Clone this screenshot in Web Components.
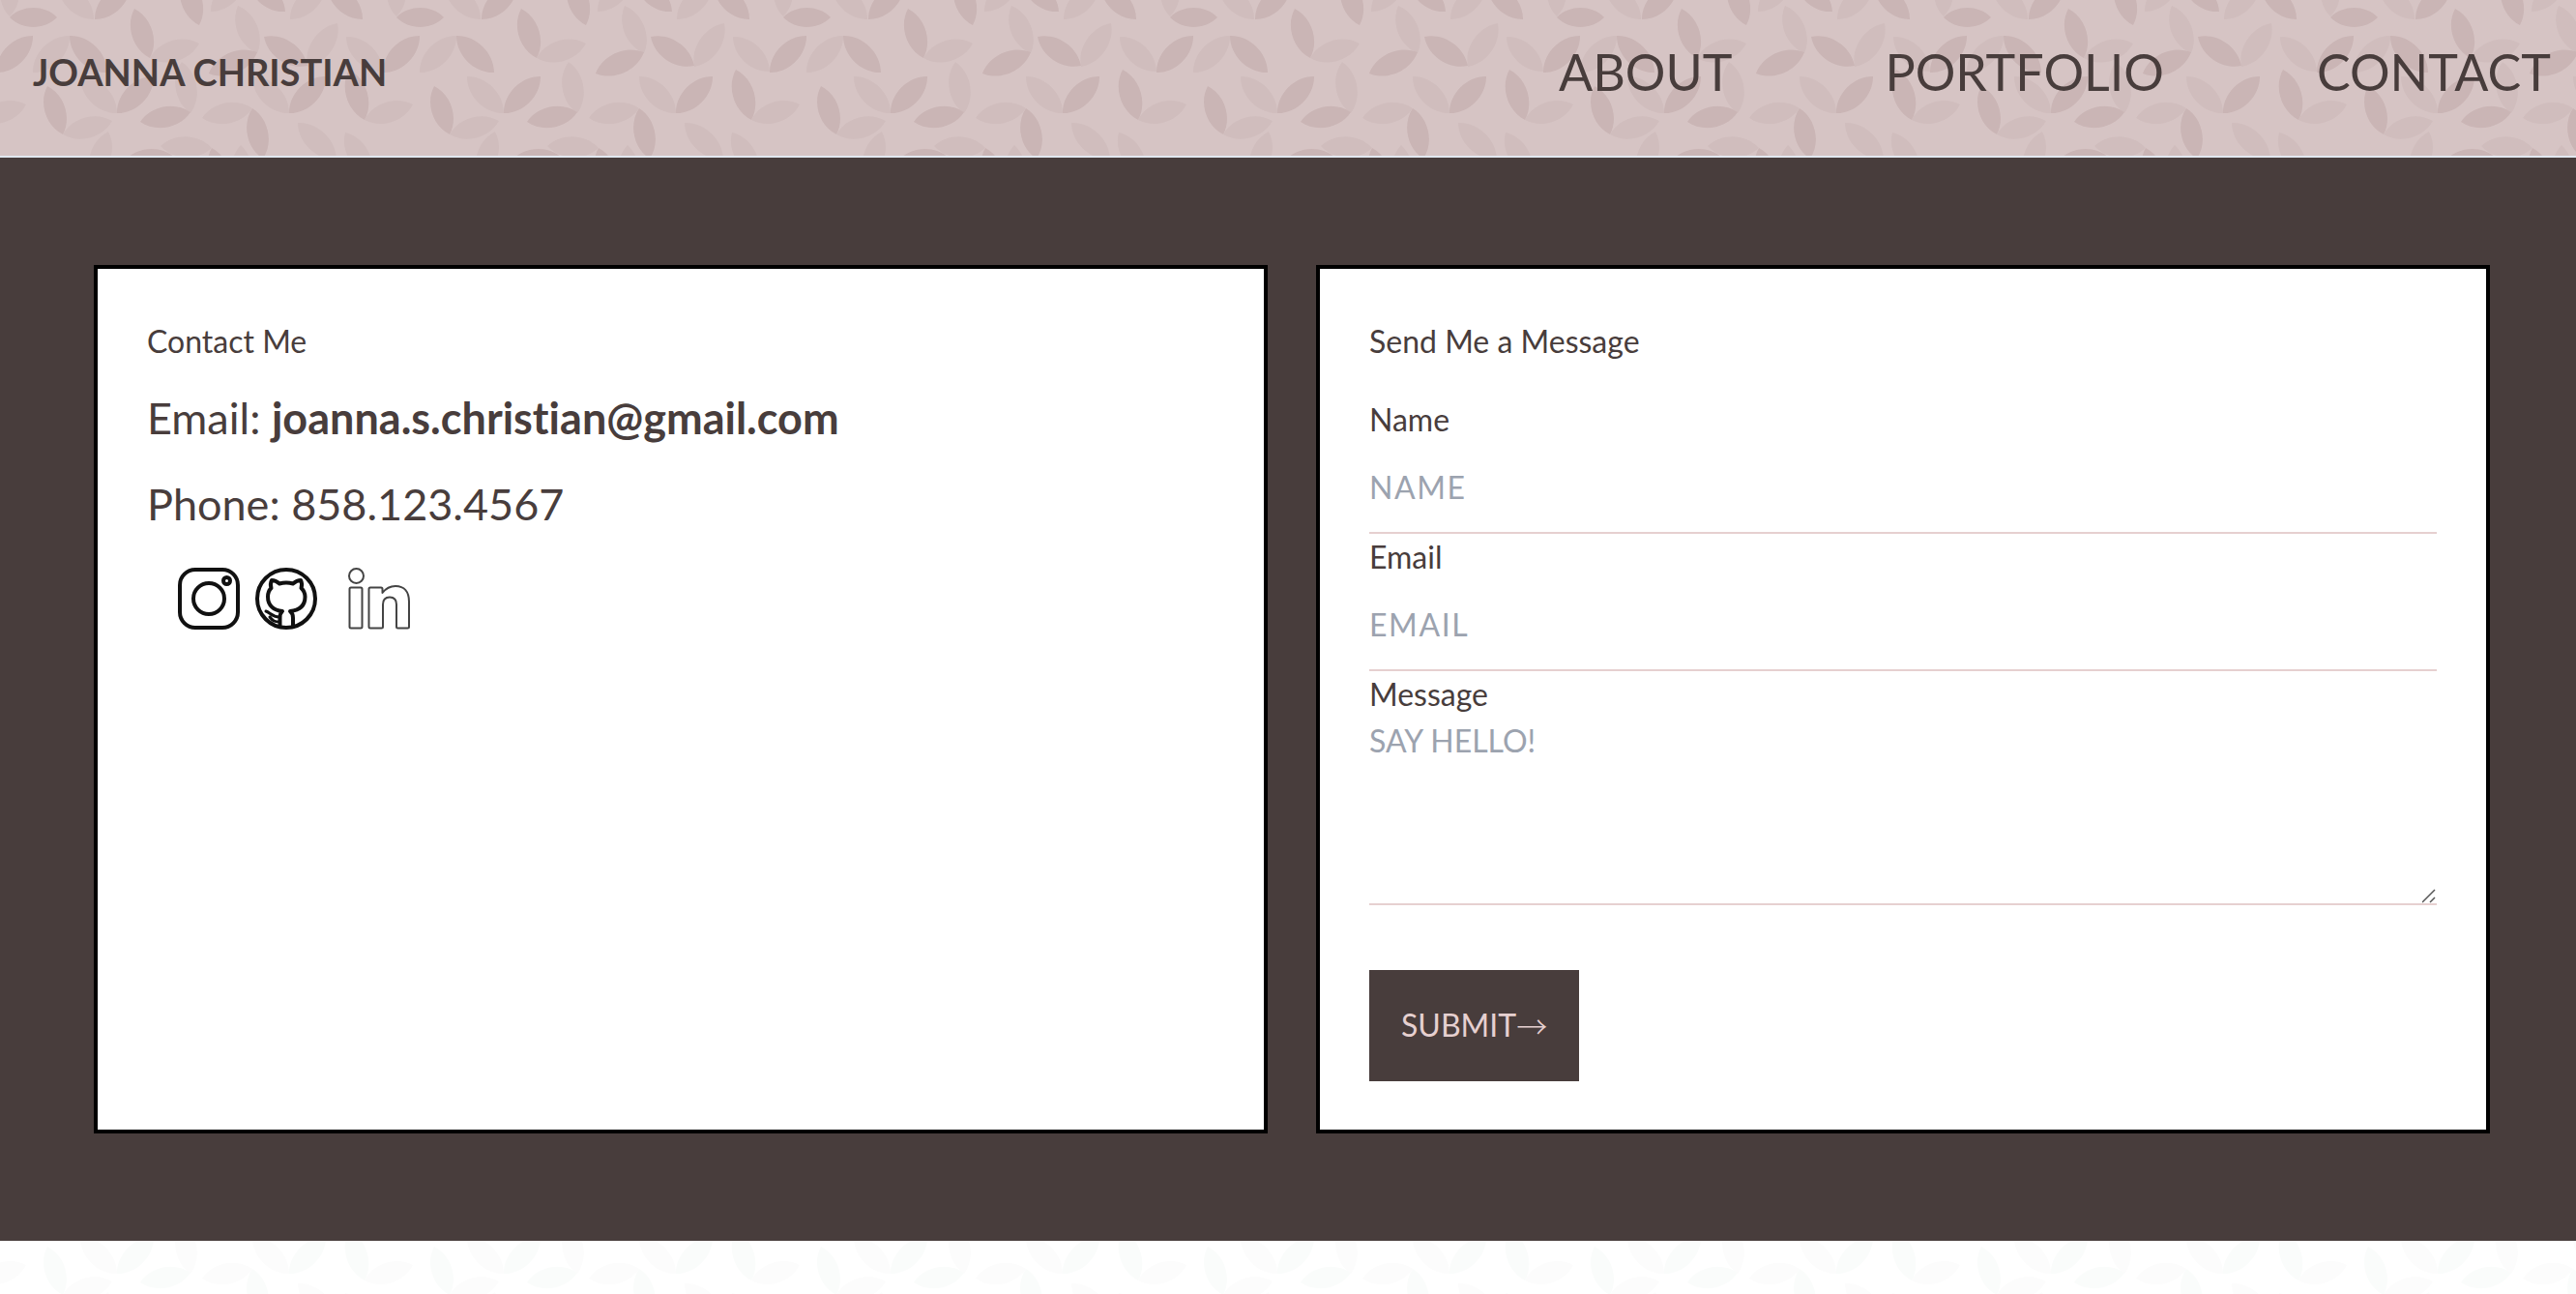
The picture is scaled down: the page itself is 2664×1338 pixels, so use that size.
<!DOCTYPE html>
<html lang="en">
<head>
<meta charset="utf-8">
<meta name="viewport" content="width=device-width, initial-scale=1">
<title>Joanna Christian</title>
<style>
  :root { --ink: #483d3c; --blush: #e6d0d0; }
  body { margin: 0; background: #fff; color: var(--ink); font: 32px/48px Lato, "Open Sans", sans-serif; font-variant-ligatures: none; }
</style>
</head>
<body>
<portfolio-page></portfolio-page>

<script>
// Leaves of the 400px tile: [shade, x1, y1, x2, y2], tip to tip
const LEAVES = [
  ['l',300,20,337,-17],['d',375,20,338,-17],['l',10,17,10,-33],['d',10,18,59,18],
  ['l',97,20,60,-17],['d',98,20,135,-17],['d',206,26,190,-25],['l',218,12,254,-25],
  ['d',295,12,257,-21],['d',139,9,155,60],['l',155,60,206,45],['l',246,6,266,55],
  ['d',266,54,216,76],['d',273,38,318,68],['l',318,69,349,24],['l',358,38,396,74],
  ['d',396,75,434,37],['l',34,75,72,37],['d',72,37,111,75],['d',299,117,337,79],
  ['l',261,79,299,117],['d',361,72,377,124],['l',377,124,427,108],['d',49,89,65,139],
  ['l',65,139,116,125],['l',83,79,121,117],['d',121,117,159,79],['l',188,64,197,117],
  ['d',197,116,145,126],['l',209,122,261,112],['d',261,112,272,164],['l',308,127,348,165],
  ['l',357,137,384,182],['l',112,136,96,186],['l',166,151,219,153],['d',219,153,234,204],
  ['d',129,166,181,163],['l',249,150,251,202]
];

// A leaf is two mirrored curves that meet at its tips
function leafPath(x1, y1, x2, y2) {
  const dx = x2 - x1, dy = y2 - y1, k = 0.54;
  const px = -dy * k, py = dx * k;
  const p = (t, s) => `${(x1 + dx * t + px * s).toFixed(1)} ${(y1 + dy * t + py * s).toFixed(1)}`;
  return `M${x1} ${y1}C${p(.26, .5)} ${p(.74, .5)} ${x2} ${y2}C${p(.74, -.5)} ${p(.26, -.5)} ${x1} ${y1}Z`;
}
const svgUrl = svg => `url("data:image/svg+xml,${encodeURIComponent(svg)}")`;
function leafTile(dark, light) {
  const draw = (shade, fill) => {
    const d = LEAVES.filter(l => l[0] === shade).map(l => leafPath(...l.slice(1))).join('');
    return `<g fill="${fill}"><path d="${d}"/><path d="${d}" transform="translate(-400 0)"/></g>`;
  };
  return svgUrl(`<svg xmlns="http://www.w3.org/2000/svg" width="400" height="400">${draw('l', light)}${draw('d', dark)}</svg>`);
}
const GRIP = svgUrl('<svg xmlns="http://www.w3.org/2000/svg" width="16" height="16"><path d="M0 14L13 1M8 14L13 9" fill="none" stroke="#555" stroke-width="1.5"/></svg>');

function define(name, html, setup) {
  const template = document.createElement('template');
  template.innerHTML = html;
  customElements.define(name, class extends HTMLElement {
    constructor() {
      super();
      this.attachShadow({ mode: 'open' }).append(template.content.cloneNode(true));
    }
    connectedCallback() { if (setup) setup(this, this.shadowRoot); }
  });
}

define('site-header', `
<style>
  :host { display: block; background: #d6c4c4 ${leafTile('#cab5b5', '#d0bdbd')}; border-bottom: 2px solid #e2e8f0; }
  header { display: flex; justify-content: space-between; align-items: center; padding: 35px 26px 48px 34px; }
  .brand { font-size: 38px; font-weight: 700; }
  nav { display: flex; gap: 158px; font-size: 52px; line-height: 78px; }
  a { color: inherit; text-decoration: none; text-transform: uppercase; }
</style>
<header>
  <a class="brand" href="#home">Joanna Christian</a>
  <nav aria-label="Main"><a href="#about">About</a><a href="#portfolio">Portfolio</a><a href="#contact">Contact</a></nav>
</header>`);

define('content-card', `
<style>
  :host { display: block; box-sizing: border-box; background: #fff; border: 4px solid #000; padding: 51px 51px 50px; }
  h2 { margin: 0; font-size: 32px; font-weight: 400; line-height: 48px; }
</style>
<h2></h2>
<slot></slot>`, (el, root) => { root.querySelector('h2').textContent = el.getAttribute('heading'); });

define('contact-line', `
<style>
  :host { display: block; margin-top: 22px; font-size: 45px; line-height: 67px; }
</style>
<slot></slot>`);

define('social-links', `
<style>
  :host { display: flex; gap: 16px; margin: 32px 0 0 32px; }
  a { display: block; color: #111; }
  a:last-child { margin-left: 16px; }
  svg { display: block; width: 64px; height: 64px; fill: none; stroke: currentColor; stroke-width: 4; stroke-linejoin: round; stroke-linecap: round; }
  .thin { stroke: #444; stroke-width: 2; }
</style>
<a href="#instagram" aria-label="Instagram"><svg viewBox="0 0 64 64"><rect x="2" y="2" width="60" height="60" rx="16"/><circle cx="32" cy="32" r="16"/><circle cx="50.5" cy="13.5" r="3.5"/></svg></a>
<a href="#github" aria-label="GitHub"><svg viewBox="0 0 64 64"><circle cx="32" cy="32" r="30"/><path d="M25.5 61V52Q25.5 47 28 45C19 44 13 39 13 30Q13 24.5 16.5 21Q15 17 17 13Q21 13 25 16.5Q32 14.5 39 16.5Q43 13 47 13Q49 17 47.5 21Q51.5 25 51.5 30C51.500 39 46 44 36 45Q39 47 39 52V61"/><path d="M11 45C15 46 17 51 25 51M15 51C18 55 20 56 25 56" stroke-width="3"/></svg></a>
<a href="#linkedin" aria-label="LinkedIn"><svg class="thin" viewBox="0 0 64 64"><circle cx="8.5" cy="8.5" r="7.5"/><rect x="1.5" y="20.5" width="13" height="42" rx="1.5"/><path d="M23 20.5H34Q35.5 20.5 35.5 22V26C39 21.5 43 19 49 19C58 19 63 25 63 35V61Q63 62.5 61.5 62.5H51.5Q50 62.5 50 61V38Q50 30.5 43 30.5Q36 30.5 36 38V61Q36 62.5 34.5 62.5H23Q21.5 62.5 21.5 61V22Q21.5 20.5 23 20.5Z"/></svg></a>`);

define('message-form', `
<style>
  :host { display: block; margin-top: 33px; }
  form, label { display: block; }
  input, textarea, button { font: inherit; color: inherit; border-radius: 0; margin: 0; outline: 0; }
  input, textarea { display: block; box-sizing: border-box; width: 100%; background: transparent; border: 0; border-bottom: 2px solid var(--blush); }
  input { height: 94px; padding: 21px 0 23px; letter-spacing: .05em; }
  textarea { padding: 0; resize: vertical; }
  textarea::-webkit-resizer { background: ${GRIP} no-repeat; }
  ::placeholder { color: #9ca3af; opacity: 1; text-transform: uppercase; }
  button { display: flex; align-items: center; margin-top: 67px; padding: 33px 33px 34px; border: 0; background: var(--ink); color: var(--blush); text-transform: uppercase; }
  .arrow { font-family: "Noto Sans CJK JP", sans-serif; font-weight: 300; }
</style>
<form>
  <label for="name">Name</label>
  <input id="name" type="text" placeholder="Name">
  <label for="email">Email</label>
  <input id="email" type="email" placeholder="Email">
  <label for="message">Message</label>
  <textarea id="message" rows="4" placeholder="Say Hello!"></textarea>
  <button type="submit">Submit<span class="arrow">→</span></button>
</form>`);

define('site-footer', `
<style>
  :host { display: block; flex: 1; min-height: 55px; background: #fff ${leafTile('#fafcfb', '#fcfcfc')} 0 -83px; }
</style>
<footer></footer>`);

define('portfolio-page', `
<style>
  :host { display: flex; flex-direction: column; min-height: 100vh; }
  main { display: grid; grid-template-columns: repeat(2, minmax(0, 1fr)); gap: 50px; padding: 111px 89px 111px 97px; background: var(--ink); }
</style>
<site-header></site-header>
<main>
  <content-card heading="Contact Me">
    <contact-line>Email: <strong>joanna.s.christian@gmail.com</strong></contact-line>
    <contact-line>Phone: 858.123.4567</contact-line>
    <social-links></social-links>
  </content-card>
  <content-card heading="Send Me a Message"><message-form></message-form></content-card>
</main>
<site-footer></site-footer>`);
</script>
</body>
</html>
